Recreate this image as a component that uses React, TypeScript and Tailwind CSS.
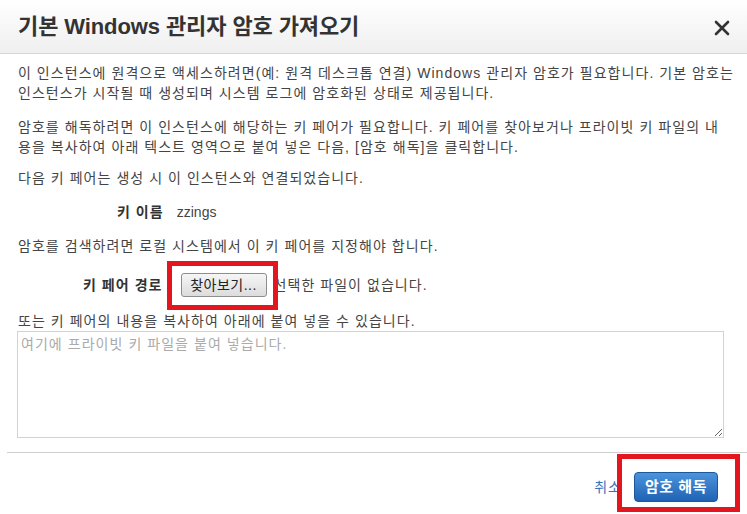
import React from 'react';

const FONT = { fontFamily: '"Liberation Sans", "Noto Sans CJK KR", sans-serif' };

function RedBox({ className }: { className: string }) {
  return <span className={'pointer-events-none absolute border-[5px] border-[#e3161f] ' + className} />;
}

export default function App() {
  return (
    <div className="h-[514px] w-[747px] overflow-hidden bg-white text-[#444]" style={FONT}>
      {/* Header */}
      <div className="flex h-[54px] items-center justify-between border-b border-[#d6d6d6] bg-gradient-to-b from-white to-[#efefef] pl-[18px] pr-[17px]">
        <h1 className="text-[22px] font-bold tracking-[-0.1px] text-[#333]">기본 Windows 관리자 암호 가져오기</h1>
        <svg width="16" height="16" viewBox="0 0 16 16" className="mt-[2px]">
          <path d="M2 2 L14 14 M14 2 L2 14" stroke="#333" strokeWidth="2.6" strokeLinecap="round" />
        </svg>
      </div>

      {/* Body */}
      <div className="px-[18px] pt-[9px] text-[14px] leading-[20px] tracking-[1.05px]">
        <p className="whitespace-nowrap">
          이 인스턴스에 원격으로 액세스하려면(예: 원격 데스크톱 연결) Windows 관리자 암호가 필요합니다. 기본 암호는
          <br />
          인스턴스가 시작될 때 생성되며 시스템 로그에 암호화된 상태로 제공됩니다.
        </p>
        <p className="mt-[14px] whitespace-nowrap">
          암호를 해독하려면 이 인스턴스에 해당하는 키 페어가 필요합니다. 키 페어를 찾아보거나 프라이빗 키 파일의 내
          <br />
          용을 복사하여 아래 텍스트 영역으로 붙여 넣은 다음, [암호 해독]을 클릭합니다.
        </p>
        <p className="mt-[11px]">다음 키 페어는 생성 시 이 인스턴스와 연결되었습니다.</p>

        <div className="mt-[14px] flex items-center gap-[13px] pl-[99px]">
          <span className="font-bold text-[#333]">키 이름</span>
          <span className="tracking-normal">zzings</span>
        </div>

        <p className="mt-[14px]">암호를 검색하려면 로컬 시스템에서 이 키 페어를 지정해야 합니다.</p>

        <div className="mt-[17px] flex items-center pl-[65px]">
          <span className="font-bold text-[#333]">키 페어 경로</span>
          <span className="relative ml-[18px] inline-flex">
            <button className="h-[24px] w-[86px] rounded-[3px] border border-[#8e8e8e] bg-gradient-to-b from-[#f6f6f6] to-[#dcdcdc] text-[14px] tracking-[0.5px] text-[#222]">
              찾아보기...
            </button>
            <RedBox className="-left-[14px] -right-[11px] -top-[12px] -bottom-[13px]" />
          </span>
          <span className="ml-[7px]">선택한 파일이 없습니다.</span>
        </div>

        <p className="mt-[14px]">또는 키 페어의 내용을 복사하여 아래에 붙여 넣을 수 있습니다.</p>

        <textarea
          className="mt-0 block h-[107px] w-[707px] -ml-px resize-y border border-[#d3d3d3] px-[3px] py-[2px] text-[14px] leading-[20px] tracking-[1.05px] text-[#444] outline-none placeholder:text-[#aaa]"
          style={FONT}
          placeholder="여기에 프라이빗 키 파일을 붙여 넣습니다."
        />
      </div>

      {/* Footer */}
      <div className="ml-[7px] mt-[14px] flex items-center justify-end border-t border-[#cfcfcf] pr-[29px] pt-[19px]">
        <span className="mr-[12px] text-[14px] tracking-[1px] text-[#3a72b8]">취소</span>
        <span className="relative inline-flex">
          <button className="h-[30px] w-[84px] rounded-[4px] border border-[#1c5899] bg-gradient-to-b from-[#4b93dc] to-[#1f63b4] text-[15px] font-bold tracking-[0.5px] text-white">
            암호 해독
          </button>
          <RedBox className="-left-[17px] -right-[22px] -top-[18px] -bottom-[10px]" />
        </span>
      </div>
    </div>
  );
}
